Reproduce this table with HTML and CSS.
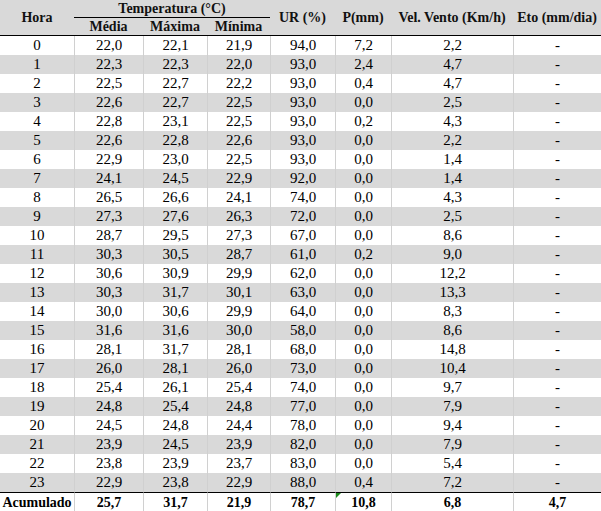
FILE: index.html
```html
<!DOCTYPE html>
<html lang="pt">
<head>
<meta charset="utf-8">
<title>Dados horários</title>
<link rel="stylesheet" href="styles.css">
</head>
<body>
<table class="data">
  <colgroup>
    <col class="c-hora">
    <col class="c-media">
    <col class="c-max">
    <col class="c-min">
    <col class="c-ur">
    <col class="c-p">
    <col class="c-vel">
    <col class="c-eto">
  </colgroup>
  <thead>
    <tr class="h1">
      <th rowspan="2" class="hb">Hora</th>
      <th colspan="3" class="temp">Temperatura (°C)</th>
      <th rowspan="2" class="hb">UR (%)</th>
      <th rowspan="2" class="hb">P(mm)</th>
      <th rowspan="2" class="hb">Vel. Vento (Km/h)</th>
      <th rowspan="2" class="hb">Eto (mm/dia)</th>
    </tr>
    <tr class="h2">
      <th class="hb">Média</th>
      <th class="hb">Máxima</th>
      <th class="hb">Mínima</th>
    </tr>
  </thead>
  <tbody>
    <tr><td>0</td><td>22,0</td><td>22,1</td><td>21,9</td><td>94,0</td><td>7,2</td><td>2,2</td><td>-</td></tr>
    <tr><td>1</td><td>22,3</td><td>22,3</td><td>22,0</td><td>93,0</td><td>2,4</td><td>4,7</td><td>-</td></tr>
    <tr><td>2</td><td>22,5</td><td>22,7</td><td>22,2</td><td>93,0</td><td>0,4</td><td>4,7</td><td>-</td></tr>
    <tr><td>3</td><td>22,6</td><td>22,7</td><td>22,5</td><td>93,0</td><td>0,0</td><td>2,5</td><td>-</td></tr>
    <tr><td>4</td><td>22,8</td><td>23,1</td><td>22,5</td><td>93,0</td><td>0,2</td><td>4,3</td><td>-</td></tr>
    <tr><td>5</td><td>22,6</td><td>22,8</td><td>22,6</td><td>93,0</td><td>0,0</td><td>2,2</td><td>-</td></tr>
    <tr><td>6</td><td>22,9</td><td>23,0</td><td>22,5</td><td>93,0</td><td>0,0</td><td>1,4</td><td>-</td></tr>
    <tr><td>7</td><td>24,1</td><td>24,5</td><td>22,9</td><td>92,0</td><td>0,0</td><td>1,4</td><td>-</td></tr>
    <tr><td>8</td><td>26,5</td><td>26,6</td><td>24,1</td><td>74,0</td><td>0,0</td><td>4,3</td><td>-</td></tr>
    <tr><td>9</td><td>27,3</td><td>27,6</td><td>26,3</td><td>72,0</td><td>0,0</td><td>2,5</td><td>-</td></tr>
    <tr><td>10</td><td>28,7</td><td>29,5</td><td>27,3</td><td>67,0</td><td>0,0</td><td>8,6</td><td>-</td></tr>
    <tr><td>11</td><td>30,3</td><td>30,5</td><td>28,7</td><td>61,0</td><td>0,2</td><td>9,0</td><td>-</td></tr>
    <tr><td>12</td><td>30,6</td><td>30,9</td><td>29,9</td><td>62,0</td><td>0,0</td><td>12,2</td><td>-</td></tr>
    <tr><td>13</td><td>30,3</td><td>31,7</td><td>30,1</td><td>63,0</td><td>0,0</td><td>13,3</td><td>-</td></tr>
    <tr><td>14</td><td>30,0</td><td>30,6</td><td>29,9</td><td>64,0</td><td>0,0</td><td>8,3</td><td>-</td></tr>
    <tr><td>15</td><td>31,6</td><td>31,6</td><td>30,0</td><td>58,0</td><td>0,0</td><td>8,6</td><td>-</td></tr>
    <tr><td>16</td><td>28,1</td><td>31,7</td><td>28,1</td><td>68,0</td><td>0,0</td><td>14,8</td><td>-</td></tr>
    <tr><td>17</td><td>26,0</td><td>28,1</td><td>26,0</td><td>73,0</td><td>0,0</td><td>10,4</td><td>-</td></tr>
    <tr><td>18</td><td>25,4</td><td>26,1</td><td>25,4</td><td>74,0</td><td>0,0</td><td>9,7</td><td>-</td></tr>
    <tr><td>19</td><td>24,8</td><td>25,4</td><td>24,8</td><td>77,0</td><td>0,0</td><td>7,9</td><td>-</td></tr>
    <tr><td>20</td><td>24,5</td><td>24,8</td><td>24,4</td><td>78,0</td><td>0,0</td><td>9,4</td><td>-</td></tr>
    <tr><td>21</td><td>23,9</td><td>24,5</td><td>23,9</td><td>82,0</td><td>0,0</td><td>7,9</td><td>-</td></tr>
    <tr><td>22</td><td>23,8</td><td>23,9</td><td>23,7</td><td>83,0</td><td>0,0</td><td>5,4</td><td>-</td></tr>
    <tr><td>23</td><td>22,9</td><td>23,8</td><td>22,9</td><td>88,0</td><td>0,4</td><td>7,2</td><td>-</td></tr>
  </tbody>
  <tfoot>
    <tr class="total">
      <td>Acumulado</td><td>25,7</td><td>31,7</td><td>21,9</td><td>78,7</td><td class="flag">10,8<span class="err" aria-hidden="true"></span></td><td>6,8</td><td>4,7</td>
    </tr>
  </tfoot>
</table>
</body>
</html>
```

FILE: styles.css
```css
html, body {
  margin: 0;
  padding: 0;
  background: #ffffff;
}

body {
  font-family: "Liberation Serif", "Times New Roman", serif;
  color: #000;
}

.data {
  border-collapse: separate;
  border-spacing: 0;
  table-layout: fixed;
  width: 601px;
}

.c-hora { width: 74px; }
.c-media { width: 69px; }
.c-max { width: 64px; }
.c-min { width: 63px; }
.c-ur { width: 65px; }
.c-p { width: 56px; }
.c-vel { width: 122px; }
.c-eto { width: 88px; }

.data th {
  background: #d9d9d9;
  font-weight: bold;
  font-size: 14px;
  line-height: 16px;
  height: 17px;
  padding: 0;
  text-align: center;
  vertical-align: middle;
  white-space: nowrap;
  color: #111;
}

.data th.temp {
  border-bottom: 1px solid #000;
  vertical-align: bottom;
}

.data th.hb {
  border-bottom: 1px solid #000;
}

.data td {
  height: 19px;
  padding: 0;
  font-size: 15px;
  line-height: 17px;
  text-align: center;
  vertical-align: middle;
  white-space: nowrap;
  border-left: 1px solid #d0d0d0;
  box-sizing: border-box;
  background: #ffffff;
}

.data td:first-child {
  border-left: none;
}

.data tbody tr:nth-child(even) td {
  background: #d9d9d9;
}

.total td {
  font-weight: bold;
  font-size: 14px;
  border-top: 1px solid #000;
  height: 20px;
}

.flag {
  position: relative;
}

.err {
  position: absolute;
  left: 0;
  top: 0;
  width: 0;
  height: 0;
  border-top: 5px solid #1b8a1b;
  border-right: 5px solid transparent;
}
```
